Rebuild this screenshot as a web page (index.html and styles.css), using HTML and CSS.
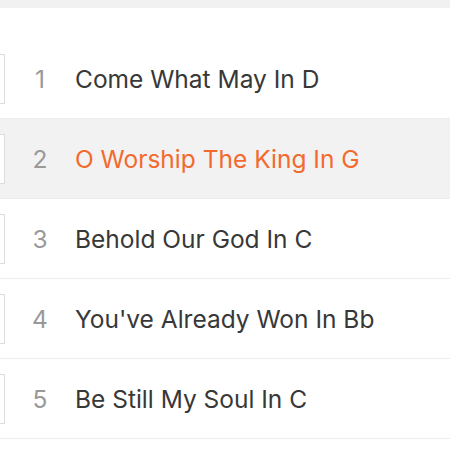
FILE: index.html
```html
<!DOCTYPE html>
<html>
<head>
<meta charset="utf-8">
<link rel="stylesheet" href="styles.css">
</head>
<body>
<div class="topbar"></div>
<div class="spacer"></div>
<ul class="list">
  <li class="row"><span class="thumb"></span><span class="num">1</span><span class="title">Come What May In D</span></li>
  <li class="row active"><span class="thumb"></span><span class="num">2</span><span class="title">O Worship The King In G</span></li>
  <li class="row"><span class="thumb"></span><span class="num">3</span><span class="title">Behold Our God In C</span></li>
  <li class="row"><span class="thumb"></span><span class="num">4</span><span class="title">You've Already Won In Bb</span></li>
  <li class="row"><span class="thumb"></span><span class="num">5</span><span class="title">Be Still My Soul In C</span></li>
</ul>
</body>
</html>
```
FILE: styles.css
```css
html, body {
  margin: 0;
  padding: 0;
  background: #fff;
  font-family: Inter, "Noto Sans", sans-serif;
}
.topbar {
  height: 8px;
  background: #f1f1f1;
}
.spacer {
  height: 31px;
}
.list {
  list-style: none;
  margin: 0;
  padding: 0;
}
.row {
  display: flex;
  align-items: center;
  height: 79px;
  border-bottom: 1px solid #ececec;
}
.row.active {
  background: #f2f2f2;
}
.thumb {
  width: 50px;
  height: 50px;
  margin-left: -45px;
  border: 1px solid #dcdcdc;
  background: #fff;
  box-sizing: border-box;
  flex: none;
}
.num {
  width: 70px;
  text-align: center;
  color: #999;
  font-size: 24.5px;
  flex: none;
}
.title {
  color: #383838;
  font-size: 24.5px;
  margin-left: 0;
}
.active .title {
  color: #f26a2e;
}
```
